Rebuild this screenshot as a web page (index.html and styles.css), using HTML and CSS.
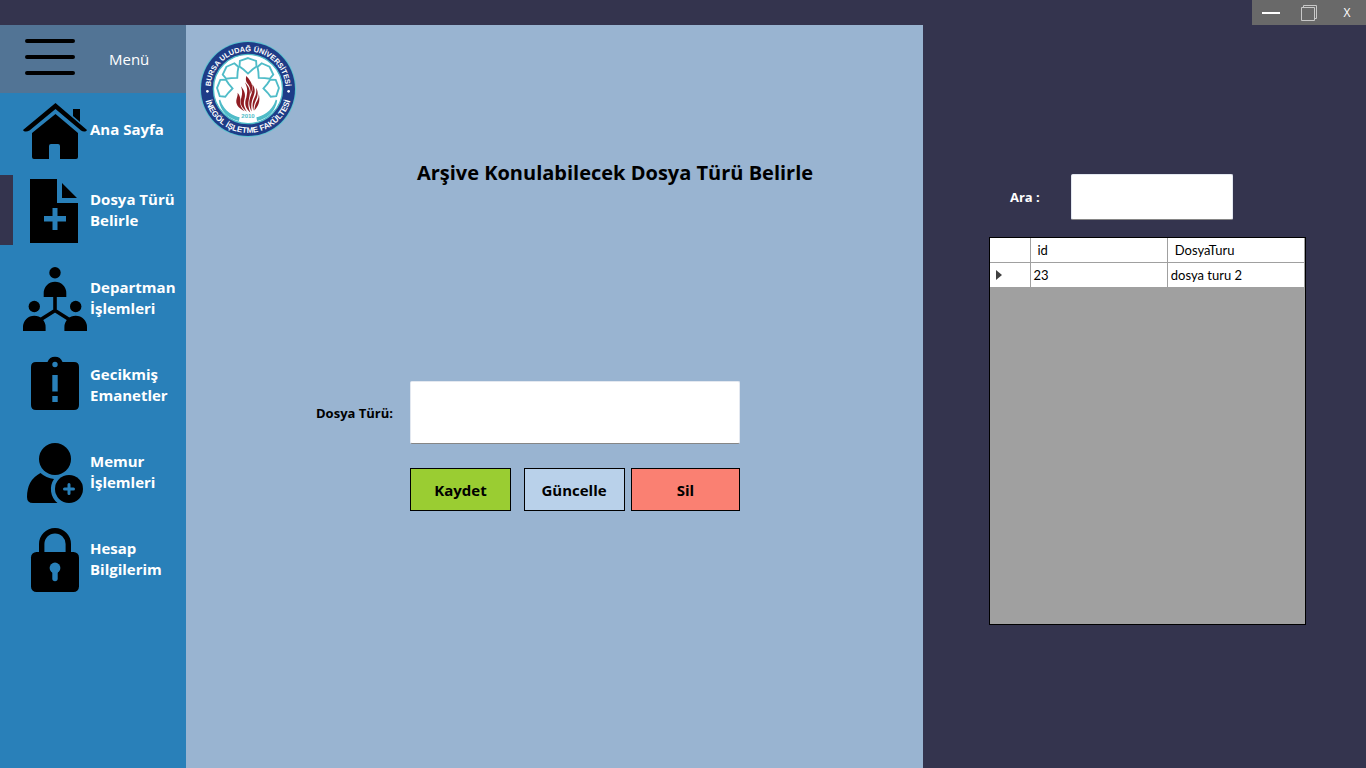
FILE: index.html
```html
<!DOCTYPE html>
<html lang="tr">
<head>
<meta charset="utf-8">
<title>Arşiv - Dosya Türü Belirle</title>
<meta name="viewport" content="width=device-width, initial-scale=1">
<link rel="stylesheet" href="styles.css">
</head>
<body class="app">
<header class="titlebar">
  <div class="window-controls">
    <button class="window-button" type="button" aria-label="Simge durumuna küçült">
      <svg width="18" height="16" viewBox="0 0 18 16"><path d="M0 8h18" stroke="#fff" stroke-width="2"/></svg>
    </button>
    <button class="window-button" type="button" aria-label="Ekranı kapla">
      <svg width="16" height="16" viewBox="0 0 16 16" fill="none" stroke="#c8c8c8"><path d="M.5 2.500h13v13H.5zM2.500 2.500V.5h13v13h-2"/></svg>
    </button>
    <button class="window-button" type="button">X</button>
  </div>
</header>
<div class="workspace">
  <nav class="sidebar">
    <button class="menu-toggle" type="button">
      <svg width="50" height="38" viewBox="0 0 50 38" stroke="#000" stroke-width="4" stroke-linecap="round"><path d="M2 3h46M2 19h46M2 35h46"/></svg>
      <span>Menü</span>
    </button>
    <a class="nav-item nav-item-first" href="#">
      <svg class="nav-icon" viewBox="0 0 64 64"><path d="M32.500 4 64 31c-1 2-4 2-6 .5L32.500 10 6.500 31.500C4 33 1 33 0 31zM50 10h7v13l-7-6zM32.500 15 55 34v24q0 2-2 2H37V47q0-2-2-2h-7q-2 0-2 2v13H11q-2 0-2-2V34z"/></svg>
      <span>Ana Sayfa</span>
    </a>
    <a class="nav-item nav-item-active" href="#" aria-current="page">
      <svg class="nav-icon" viewBox="0 0 64 64"><path fill-rule="evenodd" d="M7 0h27v24h21v40H7zM29.500 29v8H21v5.500h8.500V51h5v-8.500H43V37h-8.500v-8zM39 4l15 15H39z"/></svg>
      <span>Dosya Türü Belirle</span>
    </a>
    <a class="nav-item" href="#">
      <svg class="nav-icon" viewBox="0 0 64 64"><circle cx="32" cy="5.700" r="5.700"/><circle cx="11.300" cy="39.500" r="5.700"/><circle cx="52.700" cy="39.500" r="5.700"/><path d="M20.700 30v-4a11.300 11.300 0 0 1 22.600 0v4zM0 64v-4a11.300 11.300 0 0 1 22.600 0v4zM41.400 64v-4a11.300 11.300 0 0 1 22.600 0v4z"/><path d="M32 29v14.500L17 53M32 43.500 47 53" fill="none" stroke="#000" stroke-width="3.600"/></svg>
      <span>Departman İşlemleri</span>
    </a>
    <a class="nav-item" href="#">
      <svg class="nav-icon" viewBox="0 1 64 64"><path fill-rule="evenodd" d="M13 9h11.500a8 8 0 0 1 15 0H51q5 0 5 5v38q0 5-5 5H13q-5 0-5-5V14q0-5 5-5zM32 8.800a2.700 2.700 0 1 0 0 5.400a2.700 2.700 0 0 0 0-5.400zM29.300 22v16.500h5.400V22zM29.300 43v6h5.400v-6z"/></svg>
      <span>Gecikmiş Emanetler</span>
    </a>
    <a class="nav-item" href="#">
      <svg class="nav-icon" viewBox="0 0 64 64"><circle cx="32" cy="18" r="16"/><path d="M17.500 32Q23 37 31 38a18 18 0 0 0 3.500 24H10q-6 0-6-6 0-17 13.500-24z"/><circle cx="46" cy="48" r="14"/><path d="M46 43.500v9M41.500 48h9" stroke="#2980b9" stroke-width="3" stroke-linecap="round"/></svg>
      <span>Memur İşlemleri</span>
    </a>
    <a class="nav-item" href="#">
      <svg class="nav-icon" viewBox="0 0 64 64"><path d="M18.700 26V16a13.300 13.300 0 0 1 26.600 0v10" fill="none" stroke="#000" stroke-width="5.400"/><rect x="8" y="24" width="48" height="40" rx="5.500"/><circle cx="32" cy="40" r="5.400" fill="#2980b9"/><path d="M32 40v10.500" stroke="#2980b9" stroke-width="5.400" stroke-linecap="round"/></svg>
      <span>Hesap Bilgilerim</span>
    </a>
  </nav>
  <main class="content">
    <svg class="logo" viewBox="15 16 286 286" role="img" aria-label="Bursa Uludağ Üniversitesi İnegöl İşletme Fakültesi">
      <defs>
        <path id="ring-top" d="M46 159a112 112 0 0 1 224 0"/>
        <path id="ring-bottom" d="M27 159a131 131 0 0 0 262 0"/>
        <path id="shield" d="M0-22 22-14 23 1 12 9 0 20-12 9-23 1-22-14z"/>
      </defs>
      <circle cx="158" cy="159" r="143" fill="#5cc3cf"/>
      <circle cx="158" cy="159" r="140" fill="#1e3c87"/>
      <circle cx="158" cy="159" r="103" fill="#fff" stroke="#4fbcc8" stroke-width="4"/>
      <g class="logo-ring">
        <text class="logo-ring-top" text-anchor="middle"><textPath href="#ring-top" startOffset="50%">BURSA ULUDAĞ ÜNİVERSİTESİ</textPath></text>
        <text text-anchor="middle"><textPath href="#ring-bottom" startOffset="50%">İNEGÖL İŞLETME FAKÜLTESİ</textPath></text>
      </g>
      <circle cx="37" cy="166" r="4" fill="#fff"/><circle cx="279" cy="166" r="4" fill="#fff"/>
      <g fill="#fff" stroke="#4fbcc8" stroke-width="5">
        <use href="#shield" transform="translate(158 159) rotate(-88) translate(0 -68) scale(1.1)"/>
        <use href="#shield" transform="translate(158 159) rotate(-44) translate(0 -68) scale(1.1)"/>
        <use href="#shield" transform="translate(158 159) rotate(44) translate(0 -68) scale(1.1)"/>
        <use href="#shield" transform="translate(158 159) rotate(88) translate(0 -68) scale(1.1)"/>
        <use href="#shield" transform="translate(158 159) translate(0 -68) scale(1.1)"/>
      </g>
      <path d="M75 190c12 39 42 49 58 53l-2 11c-36-8-55-31-60-61zM241 190c-12 39-42 49-58 53l2 11c36-8 55-31 60-61z" fill="#4fbcc8"/>
      <text class="logo-year" x="158" y="246" text-anchor="middle">2010</text>
      <g fill="#8f1d23">
        <path d="M153 120c20 21 22 36 12 54 2-19-4-27-10-33-4-8-4-13-2-21z"/>
        <path d="M149 139c18 20 16 32 12 48-4 17-2 28 4 42-16-14-18-28-12-45 4-18 4-27-4-45z"/>
        <path d="M137 151c13 16 14 27 10 40-3 13-1 22 8 36-17-13-22-26-17-42 4-14 3-22-1-34z"/>
        <path d="M127 170c7 8 9 17 8 27-1 11 4 19 13 28-20-9-28-22-24-36 2-8 4-12 3-19z"/>
        <path d="M171 145c10 14 8 25 3 37-6 15-8 26-5 44-9-16-9-30-3-46 5-13 7-22 5-35z"/>
        <path d="M182 155c8 13 5 26-1 38-5 11-6 18-7 31-4-14-3-26 3-38 5-11 7-18 5-31z"/>
        <path d="M190 174c6 21-2 38-13 49 1-12 3-20 8-28 4-7 5-13 5-21z"/>
      </g>
    </svg>
    <h1 class="page-title">Arşive Konulabilecek Dosya Türü Belirle</h1>
    <form class="type-form">
      <label class="field-label" for="file-type">Dosya Türü:</label>
      <input class="text-box type-input" id="file-type" type="text">
      <div class="actions">
        <button class="action action-save" type="button">Kaydet</button>
        <button class="action action-update" type="button">Güncelle</button>
        <button class="action action-delete" type="button">Sil</button>
      </div>
    </form>
  </main>
  <aside class="records">
    <div class="search">
      <label class="search-label" for="search">Ara :</label>
      <input class="text-box search-input" id="search" type="text">
    </div>
    <div class="grid-view">
      <table class="grid-table">
        <thead>
          <tr><th class="row-head"></th><th>id</th><th>DosyaTuru</th></tr>
        </thead>
        <tbody>
          <tr><td class="row-head"><svg class="row-arrow" width="6" height="10" viewBox="0 0 6 10"><path d="M0 0l6 5-6 5z" fill="#404040"/></svg></td><td>23</td><td>dosya turu 2</td></tr>
        </tbody>
      </table>
    </div>
  </aside>
</div>
</body>
</html>
```
FILE: styles.css
```css
* {
  box-sizing: border-box;
}

.app {
  margin: 0;
  min-height: 100vh;
  display: flex;
  flex-direction: column;
  background: #34344e;
  color: #000;
  font-family: "Segoe UI", "Open Sans", "Noto Sans", sans-serif;
}

button,
input {
  font-family: inherit;
}

.titlebar {
  display: flex;
  justify-content: flex-end;
  height: 25px;
}

.window-controls {
  display: grid;
  grid-template-columns: repeat(3, 38px);
  background: #696969;
}

.window-button {
  display: flex;
  align-items: center;
  justify-content: center;
  padding: 0;
  border: 0;
  background: transparent;
  color: #fff;
  font-size: 12px;
}

.workspace {
  flex: 1;
  display: grid;
  grid-template-columns: 186px 1fr 443px;
}

.sidebar {
  display: flex;
  flex-direction: column;
  background: #2980b9;
}

.menu-toggle {
  display: flex;
  align-items: center;
  gap: 34px;
  height: 68px;
  padding: 0 25px 4px;
  border: 0;
  background: #527495;
  color: #fff;
  font-size: 15px;
}

.menu-toggle span {
  padding-top: 4px;
}

.nav-item {
  display: flex;
  align-items: center;
  gap: 3px;
  height: 87px;
  padding-left: 10px;
  border-left: 13px solid transparent;
  color: #fff;
  font-size: 15px;
  font-weight: 700;
  line-height: 21px;
  text-decoration: none;
}

.nav-item span {
  padding-bottom: 2px;
}

.nav-item-first {
  height: 75px;
}

.nav-item-active {
  height: 70px;
  margin: 7px 0 10px;
  padding-top: 2px;
  border-left-color: #34344e;
}

.nav-icon {
  flex: none;
  width: 64px;
  height: 64px;
}

.content {
  padding: 16px 14px;
  background: #99b4d1;
}

.logo {
  display: block;
  width: 96px;
  height: 96px;
}

.logo-ring {
  fill: #fff;
  font-family: "Liberation Sans", Arial, sans-serif;
  font-size: 24px;
  font-weight: 700;
}

.logo-ring-top {
  font-size: 22px;
}

.logo-year {
  fill: #4fbcc8;
  font-family: "Liberation Sans", Arial, sans-serif;
  font-size: 18px;
  font-weight: 700;
}

.page-title {
  margin: 22px 0 0 121px;
  font-size: 20px;
  font-weight: 700;
  line-height: 28px;
  text-align: center;
}

.type-form {
  display: grid;
  grid-template-columns: 74px 330px;
  gap: 24px 20px;
  align-items: center;
  margin: 194px 0 0 116px;
}

.field-label,
.search-label {
  font-size: 13px;
  font-weight: 700;
  white-space: nowrap;
}

.text-box {
  padding: 4px 8px;
  border: 1px solid #e3e8f0;
  border-bottom-color: #868686;
  border-radius: 2px;
  background: #fff;
  font-size: 16px;
}

.type-input {
  width: 100%;
  height: 63px;
}

.actions {
  grid-column: 2;
  display: grid;
  grid-template-columns: 101px 101px 109px;
  justify-content: space-between;
}

.action {
  height: 43px;
  padding: 0;
  border: 1px solid #000;
  font-size: 15px;
  font-weight: 700;
}

.action-save {
  background: #9acd32;
}

.action-update {
  margin: 0 -3px 0 3px;
  background: #b9d1ea;
}

.action-delete {
  background: #fa8072;
}

.records {
  padding: 149px 60px 24px 66px;
}

.search {
  display: flex;
  align-items: center;
  gap: 31px;
  padding-left: 21px;
}

.search-label {
  color: #fff;
}

.search-input {
  width: 162px;
  height: 46px;
}

.grid-view {
  height: 388px;
  margin-top: 17px;
  border: 1px solid #000;
  background: #a0a0a0;
}

.grid-table {
  width: 100%;
  border-collapse: collapse;
  table-layout: fixed;
  background: #fff;
  font-family: "Century Gothic", Lato, sans-serif;
  font-size: 13px;
}

.grid-table th,
.grid-table td {
  height: 25px;
  padding: 0 3px;
  border-right: 1px solid #a0a0a0;
  border-bottom: 1px solid #a0a0a0;
  font-weight: 400;
  text-align: left;
}

.grid-table th {
  height: 24px;
  padding-left: 7px;
}

.grid-table .row-head {
  width: 40px;
  padding-left: 6px;
}

.row-arrow {
  display: block;
}
```
